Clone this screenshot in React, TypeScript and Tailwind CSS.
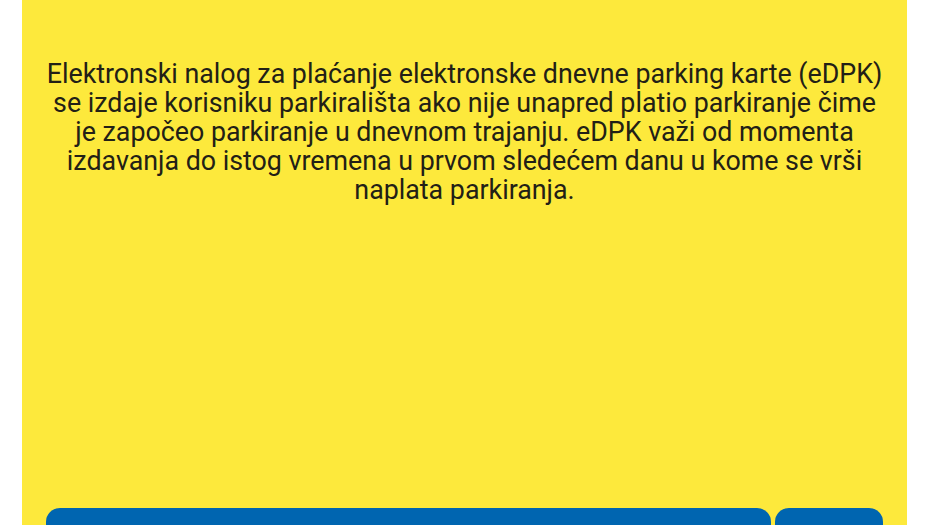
import React from "react";

// eDPK info screen: yellow card with description and action buttons below
const lines = [
  "Elektronski nalog za plaćanje elektronske dnevne parking karte (eDPK)",
  "se izdaje korisniku parkirališta ako nije unapred platio parkiranje čime",
  "je započeo parkiranje u dnevnom trajanju. eDPK važi od momenta",
  "izdavanja do istog vremena u prvom sledećem danu u kome se vrši",
  "naplata parkiranja.",
];

export default function App() {
  return (
    <div className="h-[525px] w-[930px] overflow-hidden bg-white px-[22px]">
      <div
        className="flex h-[600px] w-[885px] flex-col bg-[#fde93c] px-6 pt-[60px]"
        style={{ fontFamily: "Roboto, 'Noto Sans', sans-serif" }}
      >
        <p className="whitespace-nowrap text-center text-[26.8px] leading-[29px] text-[#222016]">
          {lines.map((l) => (
            <span key={l} className="block">
              {l}
            </span>
          ))}
        </p>
        <div className="mt-[303px] flex gap-1">
          <button className="h-14 flex-1 rounded-[14px] bg-[#0065b0]" />
          <button className="h-14 w-[108px] rounded-[14px] bg-[#0065b0]" />
        </div>
      </div>
    </div>
  );
}
